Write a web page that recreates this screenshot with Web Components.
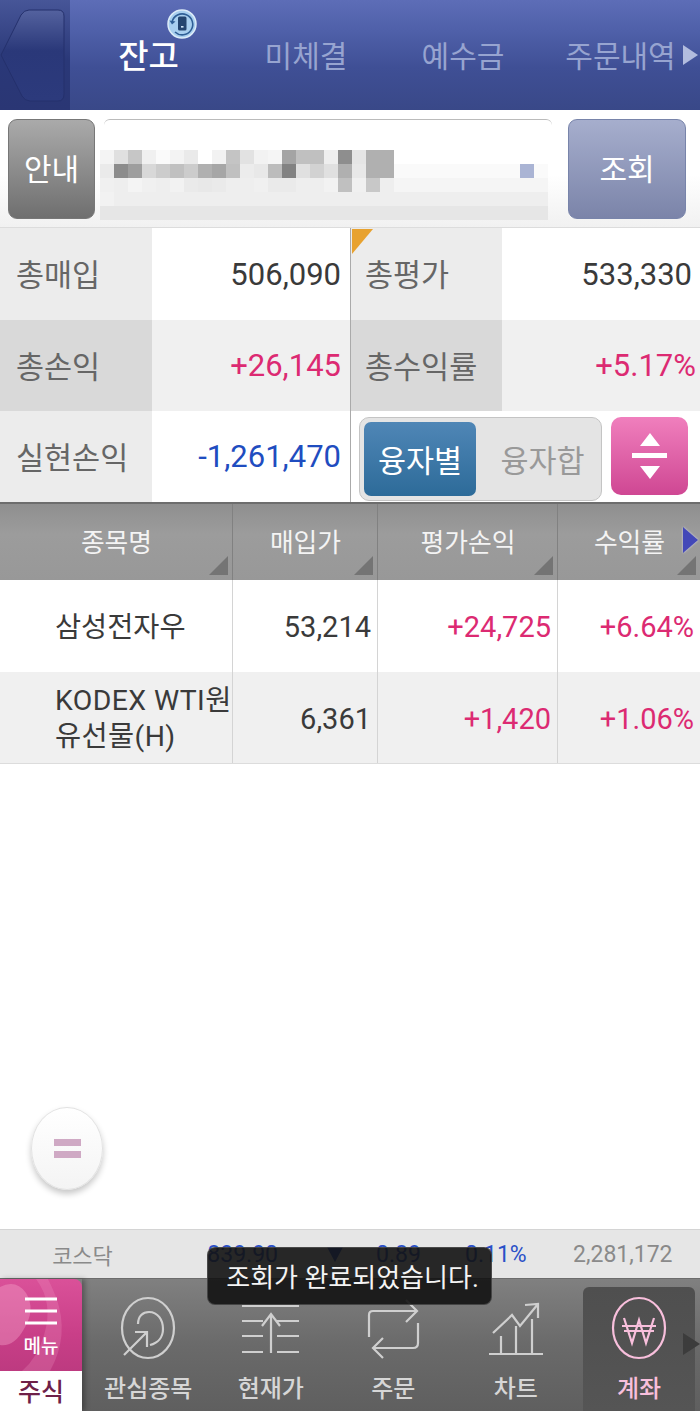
<!DOCTYPE html>
<html lang="ko">
<head>
<meta charset="utf-8">
<title>잔고</title>
<style>
  html, body { margin: 0; padding: 0; background: white; }
  body {
    width: 700px;
    height: 1411px;
    overflow: hidden;
    position: relative;
    display: flex;
    flex-direction: column;
    font-family: Roboto, "Noto Sans CJK KR", sans-serif;
  }
  .spacer { flex: 1; }
</style>
</head>
<body>
  <top-tabs>
    <tab-item active sync>잔고</tab-item>
    <tab-item>미체결</tab-item>
    <tab-item>예수금</tab-item>
    <tab-item more>주문내역</tab-item>
  </top-tabs>
  <account-bar></account-bar>
  <summary-panel></summary-panel>
  <stock-table>
    <stock-row name="삼성전자우" price="53,214" profit="+24,725" rate="+6.64%"></stock-row>
    <stock-row alt name="KODEX WTI원유선물(H)" price="6,361" profit="+1,420" rate="+1.06%"></stock-row>
  </stock-table>
  <div class="spacer"></div>
  <ticker-bar></ticker-bar>
  <bottom-nav>
    <nav-item label="관심종목" icon="target"></nav-item>
    <nav-item label="현재가" icon="price"></nav-item>
    <nav-item label="주문" icon="order"></nav-item>
    <nav-item label="차트" icon="chart"></nav-item>
    <nav-item label="계좌" icon="won" active></nav-item>
  </bottom-nav>
  <float-button></float-button>
  <toast-message>조회가 완료되었습니다.</toast-message>

<script>
class TopTabs extends HTMLElement {
  constructor() {
    super();
    this.attachShadow({ mode: 'open' });
    this.shadowRoot.innerHTML = `
      <style>
        :host {
          display: flex;
          height: 110px;
          flex: none;
          background: linear-gradient(#5d6db7 0%, #4f60a9 28%, #3f4f95 62%, #394888 100%);
        }
        .back {
          width: 70px;
          flex: none;
          background: linear-gradient(#475698, #2a3878 55%, #2a3674);
        }
        .back svg { display: block; }
        .tabs { flex: 1; display: flex; }
      </style>
      <div class="back">
        <svg width="70" height="110" viewBox="0 0 70 110">
          <defs>
            <linearGradient id="bk" x1="0" y1="0" x2="0" y2="1">
              <stop offset="0" stop-color="#54629f"/>
              <stop offset=".45" stop-color="#2a3879"/>
              <stop offset="1" stop-color="#2c3a7c"/>
            </linearGradient>
          </defs>
          <path d="M1 55 L21 15 Q24 10 29 10 L58 10 Q64 10 64 16 L64 94 Q64 101 58 101 L30 101 Q25 101 22 96 Z" fill="url(#bk)" stroke="#24306c" stroke-width="1"/>
        </svg>
      </div>
      <div class="tabs"><slot></slot></div>
    `;
  }
}

class TabItem extends HTMLElement {
  constructor() {
    super();
    this.attachShadow({ mode: 'open' });
    const sync = this.hasAttribute('sync') ? `
      <svg class="sync" width="30" height="30" viewBox="0 0 30 30">
        <circle cx="15" cy="15" r="14" fill="#a8cfef" stroke="#dcecf8" stroke-width="1.5"/>
        <path d="M5 13 A10.5 10.5 0 1 1 8 23" fill="none" stroke="#2f5f96" stroke-width="1.6"/>
        <path d="M2.5 11.5 L5 15.5 L8.5 12.5 Z" fill="#2f5f96"/>
        <rect x="11" y="7.5" width="8.5" height="14" rx="1.5" fill="#24456f"/>
        <rect x="14" y="17" width="2.5" height="1.6" fill="#cfe4f5"/>
      </svg>` : '';
    const more = this.hasAttribute('more') ? '<span class="more"></span>' : '';
    this.shadowRoot.innerHTML = `
      <style>
        :host {
          display: flex;
          position: relative;
          width: 157px;
          flex: none;
          height: 110px;
          box-sizing: border-box;
          padding: 0 0 3px 1px;
          align-items: center;
          justify-content: center;
          color: #97a4d0;
          font-size: 30px;
          white-space: nowrap;
        }
        :host([active]) { color: #fff; font-size: 33px; font-weight: 500; padding-left: 0; }
        :host([more]) { width: 159px; padding-left: 0; }
        .sync { position: absolute; left: 97px; top: 9px; }
        .more {
          position: absolute;
          right: 2px;
          top: 45px;
          width: 0;
          height: 0;
          border-left: 15px solid #b2bcde;
          border-top: 10px solid transparent;
          border-bottom: 10px solid transparent;
        }
      </style>
      <span><slot></slot></span>${sync}${more}
    `;
  }
}

class AccountBar extends HTMLElement {
  constructor() {
    super();
    this.attachShadow({ mode: 'open' });
    this.shadowRoot.innerHTML = `
      <style>
        :host {
          display: flex;
          flex: none;
          height: 118px;
          box-sizing: border-box;
          padding: 9px 14px 0 8px;
          background: linear-gradient(#fff 55%, #f1f1f1);
          border-bottom: 1px solid #dcdcdc;
        }
        button {
          font: inherit;
          font-size: 30px;
          color: #fff;
          width: 87px;
          height: 100px;
          padding: 0 0 4px;
          flex: none;
          border-radius: 9px;
          border: 1px solid #777;
          background: linear-gradient(#aaa, #6f6f6f);
        }
        button.q {
          width: 118px;
          border-color: #7884aa;
          background: linear-gradient(#a6aecd, #7b84a9);
        }
        .acct {
          flex: 1;
          margin: 0 16px 0 9px;
          height: 101px;
          box-sizing: border-box;
          border-top: 1px solid #bbb;
          border-radius: 6px 6px 0 0;
          padding-top: 30px;
        }
        account-blur { display: block; }
      </style>
      <button>안내</button>
      <div class="acct"><account-blur></account-blur></div>
      <button class="q">조회</button>
    `;
  }
}

// blurred account number, one cell per mosaic block
class AccountBlur extends HTMLElement {
  constructor() {
    super();
    this.attachShadow({ mode: 'open' });
    const rows = [
      'f4 e0 c6 f0 fa f3 ea ff f2 c4 e2 f2 f5 a4 c0 c0 ee 8e e5 b0 b0',
      'ea 8c 9e d8 cc c0 cc b0 a6 c0 ec e8 bc 82 e0 d2 e0 b0 e8 b0 b0',
      'f0 ee f4 f0 ee f2 ea e8 ea ee ee f0 ea ea ee ee f2 c0 f0 c8 ee',
      'f2 ee ee ee ee ee ee ee ee ee ee ee ee ee ee ee ee ee ee ee ee',
      'e6 e6 e6 e6 e6 e6 e6 e6 e6 e6 e6 e6 e6 e6 e6 e6 e6 e6 e6 e6 e6'
    ];
    let cells = '';
    rows.forEach((row, r) => {
      const vals = row.split(' ');
      for (let i = 0; i < 32; i++) {
        let c;
        if (i < vals.length) c = '#' + vals[i].repeat(3);
        else if (r === 0) c = '#fff';
        else if (r === 1) c = i === 30 ? '#aab4d4' : '#fafafa';
        else if (r === 2) c = '#f5f5f5';
        else c = r === 3 ? '#eeeeee' : '#e6e6e6';
        cells += `<i style="background:${c}"></i>`;
      }
    });
    this.shadowRoot.innerHTML = `
      <style>
        :host { display: block; margin-left: -4px; width: 448px; overflow: hidden; }
        .m { display: grid; grid-template-columns: repeat(32, 14px); grid-auto-rows: 14px; }
        i { display: block; }
      </style>
      <div class="m">${cells}</div>
    `;
  }
}

class SummaryPanel extends HTMLElement {
  constructor() {
    super();
    this.attachShadow({ mode: 'open' });
    this.shadowRoot.innerHTML = `
      <style>
        :host {
          display: grid;
          flex: none;
          grid-template-columns: 152px 198px 152px 198px;
          grid-template-rows: 92px 91px 91px;
          height: 274px;
          font-size: 31px;
          color: #3a3a3a;
          position: relative;
        }
        .l, .v { display: flex; align-items: center; }
        .l { padding: 0 0 2px 16px; color: #666; background: #ececec; font-size: 30.5px; }
        .v { justify-content: flex-end; padding-right: 9px; background: #fff; }
        .z .l { background: #d9d9d9; }
        .z .v { background: #f0f0f0; }
        .w { display: contents; }
        .l.rgt { border-left: 1px solid #aaa; padding-left: 14px; position: relative; }
        .v.last { padding-right: 8px; }
        .v.last2 { padding-right: 4px; }
        .up { color: #dc2a72; }
        .dn { color: #1f4dc0; }
        .corner {
          position: absolute;
          left: 1px;
          top: 1px;
          width: 0;
          height: 0;
          border-top: 25px solid #e8a22f;
          border-right: 21px solid transparent;
        }
        .ctl {
          grid-column: 3 / 5;
          border-left: 1px solid #aaa;
          display: flex;
          gap: 9px;
          padding: 6px 12px 0 8px;
          background: #fff;
        }
        .seg {
          width: 243px;
          height: 84px;
          box-sizing: border-box;
          padding: 4px;
          display: flex;
          background: #e4e4e4;
          border: 1px solid #c4c4c4;
          border-radius: 10px;
        }
        .seg div {
          width: 112px;
          height: 74px;
          box-sizing: border-box;
          display: flex;
          align-items: center;
          justify-content: center;
          color: #999;
          font-size: 30.5px;
        }
        .seg div.on {
          color: #fff;
          border-radius: 7px;
          background: linear-gradient(#4f86b6, #2d6b99);
        }
        .seg div + div { width: 121px; padding-left: 12px; }
        .sort {
          width: 78px;
          height: 78px;
          border-radius: 10px;
          background: linear-gradient(#f07fbd, #cf4793);
          display: flex;
          align-items: center;
          justify-content: center;
        }
      </style>
      <div class="l">총매입</div><div class="v">506,090</div>
      <div class="l rgt"><span class="corner"></span>총평가</div><div class="v last">533,330</div>
      <div class="w z"><div class="l">총손익</div><div class="v up">+26,145</div>
      <div class="l rgt">총수익률</div><div class="v up last2">+5.17%</div></div>
      <div class="l">실현손익</div><div class="v dn">-1,261,470</div>
      <div class="ctl">
        <div class="seg"><div class="on">융자별</div><div>융자합</div></div>
        <div class="sort">
          <svg width="36" height="48" viewBox="0 0 36 48">
            <path d="M18 1 L28 14 L8 14 Z M0 21 H35 V26 H0 Z M8 34 L28 34 L18 47 Z" fill="#fff"/>
          </svg>
        </div>
      </div>
    `;
  }
}

class StockTable extends HTMLElement {
  constructor() {
    super();
    this.attachShadow({ mode: 'open' });
    this.shadowRoot.innerHTML = `
      <style>
        :host { display: block; flex: none; }
        .head {
          display: grid;
          grid-template-columns: 233px 145px 180px 142px;
          height: 78px;
          box-sizing: border-box;
          border-top: 2px solid #6d6d6d;
          background: linear-gradient(#8f8f8f, #9c9c9c 40%, #989898);
          color: #f4f4f4;
          font-size: 25.8px;
        }
        .h {
          position: relative;
          display: flex;
          align-items: center;
          justify-content: center;
          padding: 0 0 4px 1px;
          border-right: 1px solid #818181;
        }
        .h:last-child { border-right: 0; }
        .h::after {
          content: "";
          position: absolute;
          right: 4px;
          bottom: 5px;
          width: 0;
          height: 0;
          border-bottom: 19px solid #747474;
          border-left: 19px solid transparent;
        }
        .next {
          position: absolute;
          right: 2px;
          top: 23px;
          width: 0;
          height: 0;
          border-left: 15px solid #4348b8;
          border-top: 13px solid transparent;
          border-bottom: 13px solid transparent;
          filter: drop-shadow(0 0 1px #d8d8ec);
        }
      </style>
      <div class="head">
        <div class="h">종목명</div>
        <div class="h">매입가</div>
        <div class="h">평가손익</div>
        <div class="h">수익률<span class="next"></span></div>
      </div>
      <slot></slot>
    `;
  }
}

class StockRow extends HTMLElement {
  constructor() {
    super();
    this.attachShadow({ mode: 'open' });
    this.shadowRoot.innerHTML = `
      <style>
        :host {
          display: grid;
          grid-template-columns: 233px 145px 180px 142px;
          height: 92px;
          box-sizing: border-box;
          background: #fff;
          color: #3a3a3a;
          font-size: 29px;
        }
        :host([alt]) { background: #f0f0f0; border-bottom: 1px solid #dcdcdc; }
        div {
          display: flex;
          align-items: center;
          justify-content: flex-end;
          border-right: 1px solid #d4d4d4;
          padding: 2px 6px 0 0;
          box-sizing: border-box;
        }
        .n {
          justify-content: flex-start;
          padding: 3px 0 0 55px;
          line-height: 36px;
          word-break: break-all;
          font-size: 28.4px;
        }
        :host([alt]) .n { letter-spacing: .4px; }
        .up { color: #dc2a72; }
        .up.e { border-right: 0; }
      </style>
      <div class="n"><span>${this.getAttribute('name')}</span></div>
      <div>${this.getAttribute('price')}</div>
      <div class="up">${this.getAttribute('profit')}</div>
      <div class="up e">${this.getAttribute('rate')}</div>
    `;
  }
}

class TickerBar extends HTMLElement {
  constructor() {
    super();
    this.attachShadow({ mode: 'open' });
    this.shadowRoot.innerHTML = `
      <style>
        :host {
          display: flex;
          flex: none;
          height: 49px;
          box-sizing: border-box;
          border-top: 1px solid #d4d4d4;
          background: #e6e6e6;
          align-items: center;
          font-size: 23px;
          color: #2a50c8;
        }
        span { display: block; white-space: nowrap; }
        .name { width: 165px; text-align: center; color: #8a8a8a; font-size: 22px; }
        .idx { width: 113px; text-align: right; }
        .tri {
          margin-left: 49px;
          width: 0;
          height: 0;
          border-top: 15px solid #2a50c8;
          border-left: 8px solid transparent;
          border-right: 8px solid transparent;
        }
        .chg { width: 45px; margin-left: 33px; }
        .pct { width: 62px; margin-left: 44px; }
        .vol { margin-left: 46px; color: #8a8a8a; }
      </style>
      <span class="name">코스닥</span>
      <span class="idx">839.90</span>
      <span class="tri"></span>
      <span class="chg">0.89</span>
      <span class="pct">0.11%</span>
      <span class="vol">2,281,172</span>
    `;
  }
}

class BottomNav extends HTMLElement {
  constructor() {
    super();
    this.attachShadow({ mode: 'open' });
    this.shadowRoot.innerHTML = `
      <style>
        :host {
          display: flex;
          flex: none;
          height: 133px;
          position: relative;
          background: linear-gradient(#808080, #6a6a6a 50%, #5f5f5f);
          border-top: 1px solid #6c6c6c;
          box-sizing: border-box;
        }
        .menu {
          width: 82px;
          flex: none;
          display: flex;
          flex-direction: column;
          box-shadow: 3px 0 5px rgba(0, 0, 0, .3);
        }
        .tile {
          height: 92px;
          box-sizing: border-box;
          padding-top: 17px;
          border-radius: 0 8px 0 0;
          background: linear-gradient(#da5199, #c93f88 60%, #bd3a80);
          display: flex;
          flex-direction: column;
          align-items: center;
          color: #fff;
          font-size: 19px;
          font-weight: 500;
          position: relative;
          overflow: hidden;
        }
        .tile svg.swirl { position: absolute; left: 0; top: 0; }
        .tile svg.bars, .tile span { position: relative; }
        .tile span { margin-top: 10px; line-height: 22px; }
        .stock {
          flex: 1;
          background: #fff;
          color: #6e2048;
          font-size: 25px;
          font-weight: 500;
          display: flex;
          align-items: center;
          justify-content: center;
          padding-bottom: 3px;
        }
        .items { flex: 1; display: flex; padding-left: 5px; }
        .arrow {
          position: absolute;
          right: 0;
          top: 54px;
          width: 0;
          height: 0;
          border-left: 17px solid #3c3c3c;
          border-top: 11px solid transparent;
          border-bottom: 11px solid transparent;
        }
      </style>
      <div class="menu">
        <div class="tile">
          <svg class="swirl" width="82" height="92" viewBox="0 0 82 92">
            <path d="M0 8 Q16 0 26 14 Q36 30 24 50 Q14 68 0 66 Z" fill="#f4a6cb" opacity=".4"/>
            <path d="M36 0 Q54 24 44 56 Q38 78 22 92 L50 92 Q70 56 56 18 Q52 8 48 0 Z" fill="#f4a6cb" opacity=".22"/>
          </svg>
          <svg class="bars" width="34" height="30" viewBox="0 0 34 30">
            <path d="M1 1.5 H33 V4.5 H1 Z M1 13.5 H33 V16.5 H1 Z M1 25.5 H33 V28.5 H1 Z" fill="#fff"/>
          </svg>
          <span>메뉴</span>
        </div>
        <div class="stock">주식</div>
      </div>
      <div class="items"><slot></slot></div>
      <span class="arrow"></span>
    `;
  }
}

const NAV_ICONS = {
  target: `<ellipse cx="32" cy="29" rx="26" ry="30"/>
    <path d="M22 25 C22 17 27 13 33 13 C42 13 47 21 47 30 C47 38 42 44 34 46"/>
    <path d="M8 56 L31 33 M19 33 H31 V48"/>`,
  price: `<path d="M10 7 H67" stroke-width="3"/>
    <path d="M10 22 H31 M10 37 H31 M10 53 H31 M45 22 H67 M45 37 H67 M45 53 H67"/>
    <path d="M39 54 V15 M30 27 L39 15 L48 27"/>`,
  order: `<path d="M8 38 V16 Q8 12 12 12 H56 M45 1 L56 12 L45 23"/>
    <path d="M57 24 V44 Q57 49 52 49 H12 M22 39 L12 49 L22 59"/>`,
  chart: `<path d="M5 55 H59"/>
    <path d="M17 55 V37 M32 55 V27 M48 55 V20"/>
    <path d="M9 34 L28 16 L36 27 L54 5 M41 6 L54 5 V19"/>`,
  won: `<ellipse cx="32" cy="29" rx="26" ry="30"/>
    <path d="M17 19 L25 44 L32 21 L39 44 L47 19 M15 27 H49 M17 32 H47"/>`
};

class NavItem extends HTMLElement {
  constructor() {
    super();
    this.attachShadow({ mode: 'open' });
    const icon = NAV_ICONS[this.getAttribute('icon')];
    const w = this.getAttribute('icon') === 'price' ? 78 : 64;
    this.shadowRoot.innerHTML = `
      <style>
        :host {
          display: flex;
          flex-direction: column;
          align-items: center;
          width: 122.5px;
          flex: none;
          color: #d6d6d6;
          font-size: 24px;
          font-weight: 500;
          box-sizing: border-box;
          padding-top: 20px;
        }
        :host([active]) {
          width: 112px;
          margin: 8px 0 0 6px;
          padding-top: 12px;
          color: #f8bfdc;
          background: linear-gradient(#4f4f4f, #555);
          border-radius: 6px 6px 0 0;
        }
        svg { display: block; height: 64px; overflow: visible; }
        svg * { fill: none; stroke: currentColor; stroke-width: 2.2; }
        :host(:not([active])) svg * { stroke: #cfcfcf; }
        span { display: block; line-height: 32px; margin-top: 10px; }
      </style>
      <svg width="${w}" height="64" viewBox="0 0 ${w} 64">${icon}</svg>
      <span>${this.getAttribute('label')}</span>
    `;
  }
}

class FloatButton extends HTMLElement {
  constructor() {
    super();
    this.attachShadow({ mode: 'open' });
    this.shadowRoot.innerHTML = `
      <style>
        :host {
          position: absolute;
          left: 31px;
          top: 1107px;
          width: 72px;
          height: 83px;
          box-sizing: border-box;
          border: 1px solid #e2e2e2;
          border-radius: 50%;
          background: linear-gradient(#fff, #f4f4f4);
          box-shadow: 0 4px 6px rgba(0, 0, 0, .22);
          display: flex;
          flex-direction: column;
          align-items: center;
          justify-content: center;
          gap: 5px;
        }
        i { display: block; width: 27px; height: 7px; background: #cfa9c4; }
      </style>
      <i></i><i></i>
    `;
  }
}

class ToastMessage extends HTMLElement {
  constructor() {
    super();
    this.attachShadow({ mode: 'open' });
    this.shadowRoot.innerHTML = `
      <style>
        :host {
          position: absolute;
          left: 207px;
          top: 1247px;
          width: 285px;
          height: 58px;
          box-sizing: border-box;
          display: flex;
          align-items: center;
          justify-content: center;
          padding: 0 0 1px 6px;
          border-radius: 8px;
          background: rgba(18, 18, 18, .9);
          border: 1px solid rgba(110, 110, 110, .5);
          color: #f4f4f4;
          font-size: 26px;
          white-space: nowrap;
        }
      </style>
      <slot></slot>
    `;
  }
}

customElements.define('top-tabs', TopTabs);
customElements.define('tab-item', TabItem);
customElements.define('account-blur', AccountBlur);
customElements.define('account-bar', AccountBar);
customElements.define('summary-panel', SummaryPanel);
customElements.define('stock-table', StockTable);
customElements.define('stock-row', StockRow);
customElements.define('ticker-bar', TickerBar);
customElements.define('nav-item', NavItem);
customElements.define('bottom-nav', BottomNav);
customElements.define('float-button', FloatButton);
customElements.define('toast-message', ToastMessage);
</script>
</body>
</html>
